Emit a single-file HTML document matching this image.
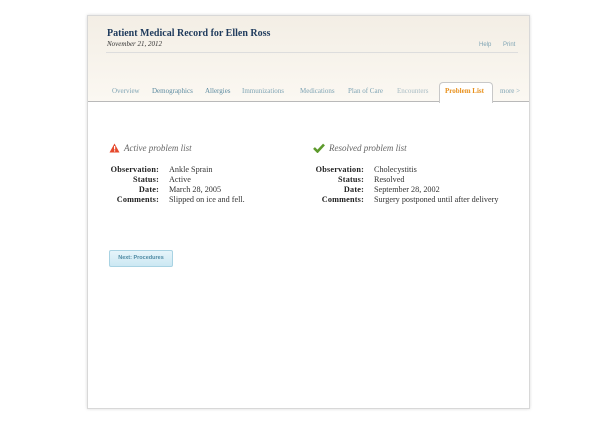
<!DOCTYPE html>
<html><head><style>
body{margin:0;width:615px;height:424px;background:#fff;position:relative;font-family:"Liberation Serif",serif;overflow:hidden}
.card{position:absolute;left:87px;top:15px;width:441px;height:392px;border:1px solid #d8d8d8;box-shadow:0 0 3px rgba(0,0,0,.15);background:#fff}
.hdr{position:absolute;left:0;top:0;width:441px;height:85px;background:linear-gradient(#f3eee5,#fbf8f2);border-bottom:1px solid #b9b9b9}
.a{position:absolute;white-space:nowrap}
.t{font-size:7px;color:#7fa4b4;top:71px}
.tab{position:absolute;left:351px;top:66px;width:52px;height:20px;background:#fff;border:1px solid #c8c8c8;border-bottom:none;border-radius:4px 4px 0 0}
.l{font-size:8.2px;font-weight:bold;text-align:right;width:70px;color:#222;letter-spacing:0.2px}
.v{font-size:8.2px;color:#333}
</style></head><body>
<div class="card">
<div class="hdr">
<div class="a" style="left:19px;top:12px;font-size:10px;font-weight:bold;color:#1e3a5c">Patient Medical Record for Ellen Ross</div>
<div class="a" style="left:19px;top:24px;font-size:7px;font-style:italic;color:#333">November 21, 2012</div>
<div class="a" style="left:18px;top:36px;width:412px;border-top:1px solid #ddd"></div>
<div class="a" style="left:391px;top:26px;font-size:6px;color:#7fa4b4;font-family:'Liberation Sans',sans-serif">Help</div>
<div class="a" style="left:415px;top:26px;font-size:6px;color:#7fa4b4;font-family:'Liberation Sans',sans-serif">Print</div>
<div class="tab"></div>
<div class="a t" style="left:24px">Overview</div>
<div class="a t" style="left:64px;color:#5b8aa0">Demographics</div>
<div class="a t" style="left:117px;color:#5b8aa0">Allergies</div>
<div class="a t" style="left:154px">Immunizations</div>
<div class="a t" style="left:212px">Medications</div>
<div class="a t" style="left:260px">Plan of Care</div>
<div class="a t" style="left:309px;color:#a8bcc4">Encounters</div>
<div class="a t" style="left:357px;color:#e8901c;font-weight:bold">Problem List</div>
<div class="a t" style="left:412px">more &gt;</div>
</div>
<svg class="a" style="left:21px;top:127px" width="11" height="10"><path d="M5.5 0.5L10.5 9.5H0.5Z" fill="#e6492d"/><rect x="5" y="3" width="1.2" height="3.5" fill="#fff"/><rect x="5" y="7.3" width="1.2" height="1.2" fill="#fff"/></svg>
<div class="a" style="left:36px;top:127px;font-size:9px;font-style:italic;color:#666">Active problem list</div>
<svg class="a" style="left:225px;top:127px" width="12" height="10"><path d="M1 5L4.5 8.5L11 1.5" stroke="#5d9a2c" stroke-width="2.6" fill="none"/></svg>
<div class="a" style="left:241px;top:127px;font-size:9px;font-style:italic;color:#666">Resolved problem list</div>
<div class="a l" style="left:1px;top:149px">Observation:</div><div class="a v" style="left:81px;top:149px">Ankle Sprain</div>
<div class="a l" style="left:1px;top:159px">Status:</div><div class="a v" style="left:81px;top:159px">Active</div>
<div class="a l" style="left:1px;top:169px">Date:</div><div class="a v" style="left:81px;top:169px">March 28, 2005</div>
<div class="a l" style="left:1px;top:179px">Comments:</div><div class="a v" style="left:81px;top:179px">Slipped on ice and fell.</div>
<div class="a l" style="left:206px;top:149px">Observation:</div><div class="a v" style="left:286px;top:149px">Cholecystitis</div>
<div class="a l" style="left:206px;top:159px">Status:</div><div class="a v" style="left:286px;top:159px">Resolved</div>
<div class="a l" style="left:206px;top:169px">Date:</div><div class="a v" style="left:286px;top:169px">September 28, 2002</div>
<div class="a l" style="left:206px;top:179px">Comments:</div><div class="a v" style="left:286px;top:179px">Surgery postponed until after delivery</div>
<div class="a" style="left:21px;top:234px;width:62px;height:15px;border:1px solid #a9d3e3;border-radius:2px;background:linear-gradient(#e6f4fa,#cce8f3);font-family:'Liberation Sans',sans-serif;font-size:5.5px;font-weight:bold;color:#4f8aa3;text-align:center;line-height:15px">Next: Procedures</div>
</div>
</body></html>
